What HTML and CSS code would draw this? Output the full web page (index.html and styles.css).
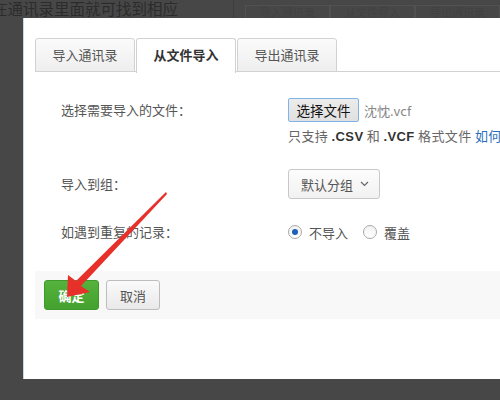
FILE: index.html
```html
<!DOCTYPE html>
<html lang="zh-CN">
<head>
    <meta charset="UTF-8">
    <title>从文件导入</title>
    <link rel="stylesheet" href="styles.css">
</head>
<body>
    <div class="screen">
        <div class="backdrop">
            <p class="backdrop-text">在通讯录里面就可找到相应</p>
            <div class="backdrop-tabs">
                <span>导入通讯录</span>
                <span>从文件导入</span>
                <span>导出通讯录</span>
            </div>
        </div>

        <div class="dialog">
            <ul class="tabs">
                <li>导入通讯录</li>
                <li class="active">从文件导入</li>
                <li>导出通讯录</li>
            </ul>

            <div class="form">
                <div class="row">
                    <label class="label">选择需要导入的文件：</label>
                    <div class="field">
                        <div class="file-line">
                            <button class="file-btn">选择文件</button>
                            <span class="file-name">沈忱.vcf</span>
                        </div>
                        <p class="hint">只支持 <b>.CSV</b> 和 <b>.VCF</b> 格式文件 <a href="#">如何导出</a></p>
                    </div>
                </div>

                <div class="row row-group">
                    <label class="label">导入到组：</label>
                    <div class="field">
                        <button class="select">默认分组
                            <svg class="chevron" width="9" height="6" viewBox="0 0 9 6"><path d="M1 1l3.5 3.5L8 1" fill="none" stroke="#666" stroke-width="1.2"/></svg>
                        </button>
                    </div>
                </div>

                <div class="row row-dup">
                    <label class="label">如遇到重复的记录：</label>
                    <div class="field radios">
                        <span class="radio checked"></span><span class="radio-text">不导入</span>
                        <span class="radio"></span><span class="radio-text">覆盖</span>
                    </div>
                </div>
            </div>

            <div class="footer">
                <button class="btn btn-ok">确定</button>
                <button class="btn btn-cancel">取消</button>
            </div>
        </div>

        <svg class="arrow" width="500" height="400" viewBox="0 0 500 400">
            <path d="M166 192 L167 194 L81 286 L90 292 L67 297 L68 275 L76 281 Z" fill="#e8302a"/>
        </svg>
    </div>
</body>
</html>
```

FILE: styles.css
```css
* {
    box-sizing: border-box;
}
body {
    margin: 0;
    background-color: #474747;
    font-family: "Noto Sans CJK SC", "Noto Sans", sans-serif;
    font-size: 13px;
    color: #555;
}
.screen {
    position: relative;
    width: 500px;
    height: 400px;
    overflow: hidden;
}
.backdrop {
    height: 18px;
    display: flex;
}
.backdrop-text {
    margin: 0 0 0 -8px;
    width: 242px;
    font-size: 15.5px;
    line-height: 17px;
    color: #2c2c2c;
    white-space: nowrap;
    border-right: 1px solid #3d3d3d;
}
.backdrop-tabs {
    display: flex;
    padding: 5px 0 0 11px;
}
.backdrop-tabs span {
    width: 85px;
    border: 1px solid #515151;
    border-bottom: none;
    color: #424242;
    font-size: 11px;
    line-height: 13px;
    text-align: center;
}
.dialog {
    margin-left: 23px;
    width: 490px;
    height: 361px;
    background-color: #fff;
    border-left: 1px solid #c9d6e6;
    padding: 20px 0 0 11px;
}
.tabs {
    list-style: none;
    margin: 0;
    padding: 0;
    display: flex;
    height: 34px;
    border-bottom: 1px solid #d2d2d2;
}
.tabs li {
    width: 100px;
    height: 34px;
    margin-right: 1px;
    border: 1px solid #d2d2d2;
    border-radius: 3px 3px 0 0;
    background: linear-gradient(#fbfbfb, #eeeeee);
    text-align: center;
    line-height: 32px;
    color: #555;
}
.tabs li.active {
    height: 35px;
    background: #fff;
    border-bottom: none;
    font-weight: bold;
    color: #333;
}
.form {
    padding: 26px 0 0 26px;
}
.row {
    display: flex;
}
.label {
    flex-shrink: 0;
    width: 227px;
    line-height: 24px;
    color: #555;
}
.field {
    flex-shrink: 0;
}
.row-group {
    margin-top: 23px;
    align-items: center;
}
.row-dup {
    margin-top: 23px;
    align-items: center;
    height: 20px;
}
.file-line {
    display: flex;
    align-items: center;
    height: 24px;
}
.file-btn {
    height: 24px;
    width: 71px;
    padding: 0;
    border: 1px solid #7eb4ea;
    border-radius: 2px;
    background: linear-gradient(#ececec, #e0e0e0);
    font-family: inherit;
    font-size: 13.5px;
    color: #111;
}
.file-name {
    margin-left: 5px;
    color: #888;
}
.hint {
    margin: 5px 0 0;
    line-height: 18px;
    color: #666;
    white-space: nowrap;
    letter-spacing: 0.4px;
}
.hint b {
    color: #333;
    font-family: "Liberation Sans", sans-serif;
}
.hint a {
    color: #2a6fbd;
    text-decoration: none;
}
.select {
    height: 30px;
    width: 92px;
    padding: 0 0 0 12px;
    display: flex;
    align-items: center;
    border: 1px solid #c8c8c8;
    border-radius: 3px;
    background: linear-gradient(#fdfdfd, #f1f1f1);
    font-family: inherit;
    font-size: 13px;
    color: #555;
}
.chevron {
    margin-left: 7px;
}
.radios {
    display: flex;
    align-items: center;
}
.radio {
    width: 14px;
    height: 14px;
    border: 1px solid #a9a9a9;
    border-radius: 50%;
    background: linear-gradient(#f2f2f2, #fff);
    display: flex;
    align-items: center;
    justify-content: center;
}
.radio.checked::after {
    content: "";
    width: 6px;
    height: 6px;
    border-radius: 50%;
    background-color: #1d5fb9;
}
.radio-text {
    margin: 0 15px 0 7px;
    color: #555;
}
.footer {
    margin-top: 29px;
    height: 48px;
    background-color: #f8f8f8;
    display: flex;
    align-items: center;
    padding-left: 9px;
    gap: 7px;
}
.btn {
    height: 30px;
    width: 55px;
    border-radius: 3px;
    font-family: inherit;
    font-size: 13px;
    padding: 0;
}
.btn-ok {
    border: 1px solid #3d9a2a;
    background: linear-gradient(#55b23c, #45a12f);
    color: #fff;
    font-weight: bold;
}
.btn-cancel {
    width: 54px;
    border: 1px solid #bdbdbd;
    background: linear-gradient(#fafafa, #e9e9e9);
    color: #555;
}
.arrow {
    position: absolute;
    left: 0;
    top: 0;
    pointer-events: none;
}
```
